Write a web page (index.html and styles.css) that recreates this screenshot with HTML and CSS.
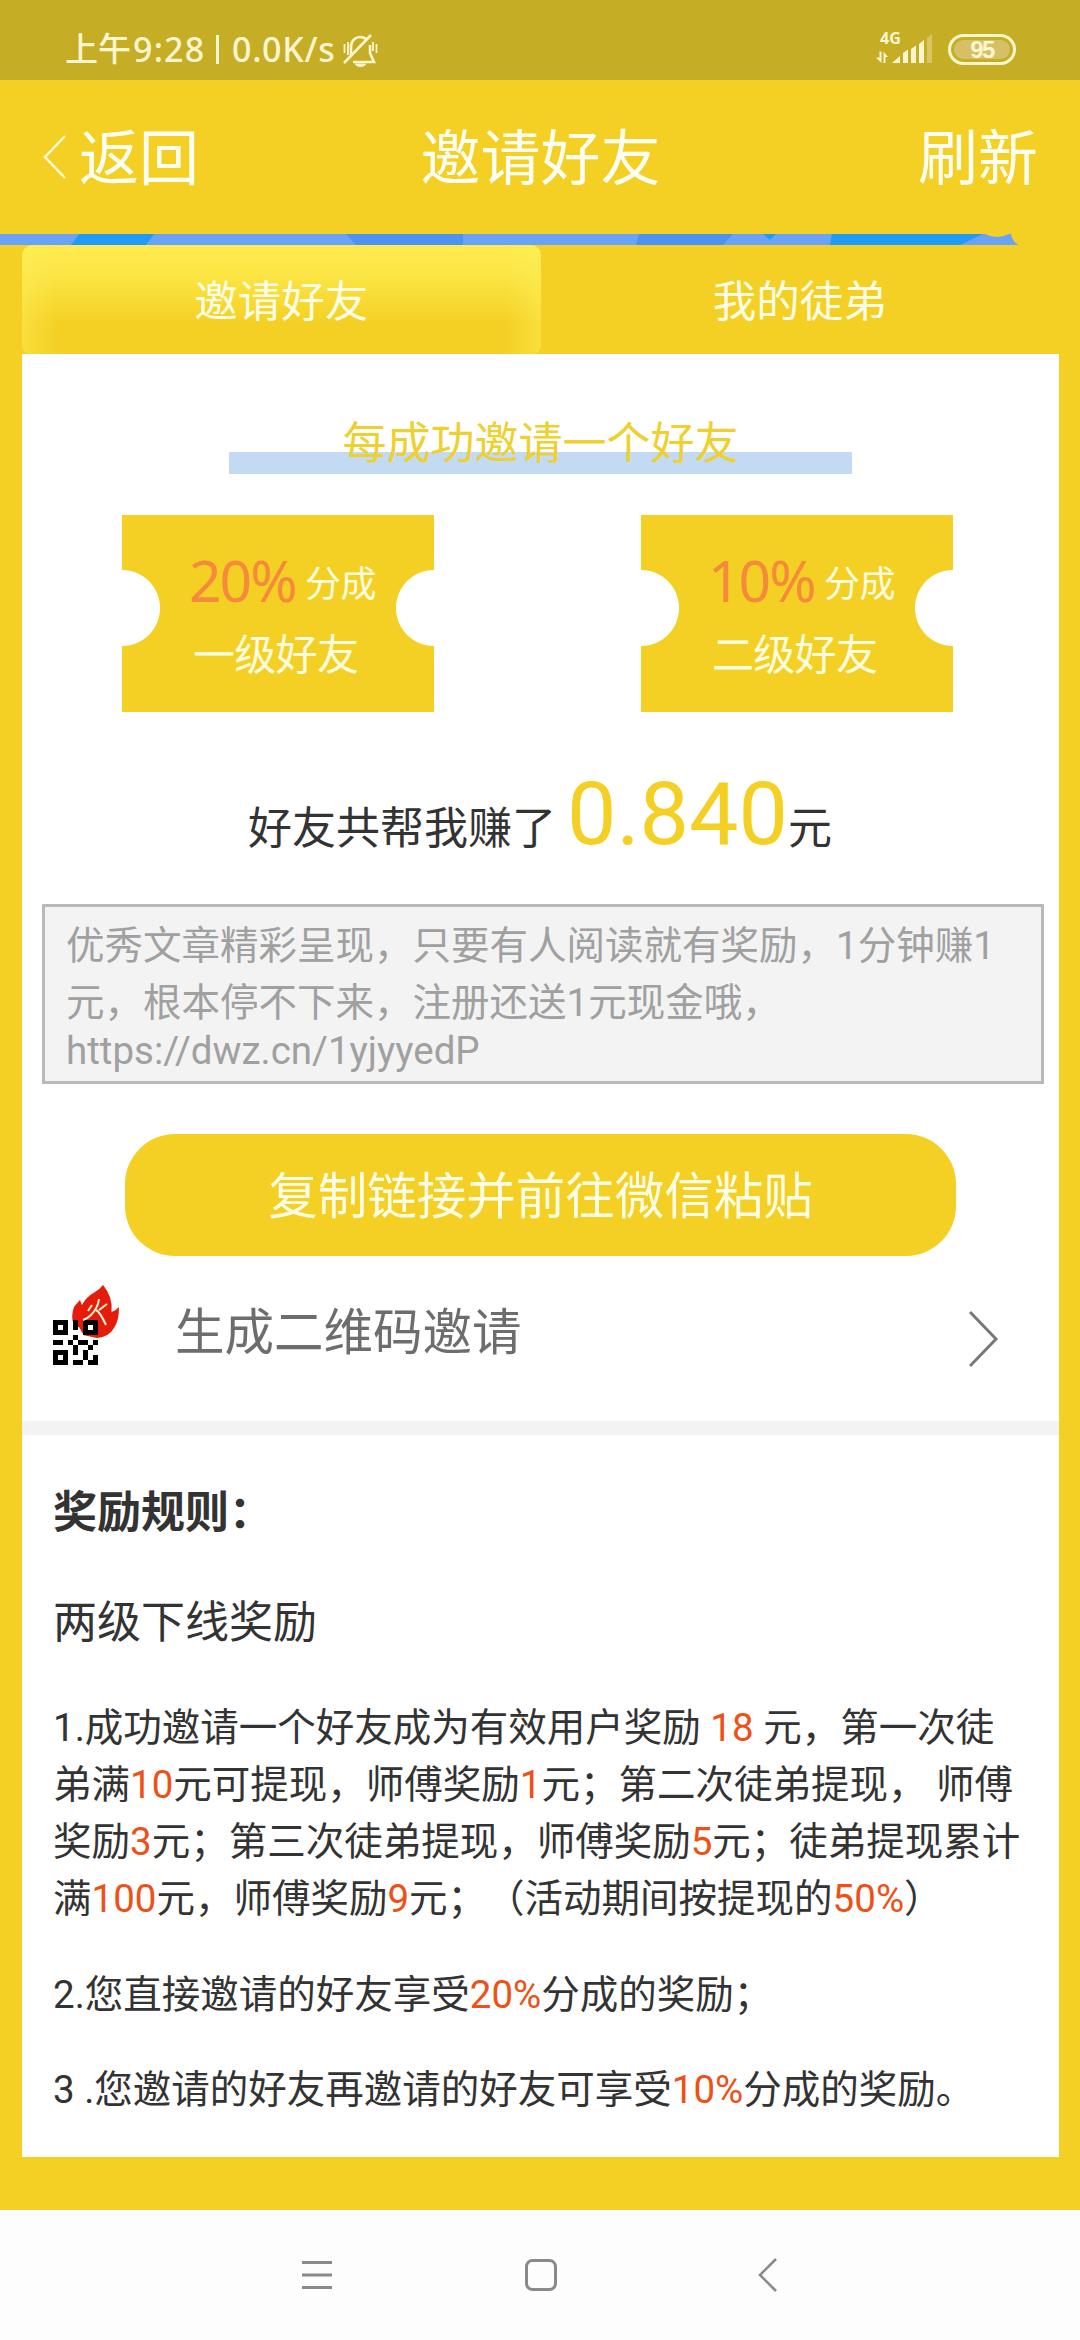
FILE: index.html
```html
<!DOCTYPE html>
<html lang="zh-CN">
<head>
<meta charset="utf-8">
<title>邀请好友</title>
<link rel="stylesheet" href="styles.css">
</head>
<body>
<div class="status">
  <span class="clock">上午</span><span class="time">9:28</span><span class="sep"></span><span class="speed">0.0K/s</span>
  <svg class="bell" width="36" height="36" viewBox="0 0 36 36" fill="none" stroke="#fff6d0" stroke-width="2.600"><path d="M29 3 2 31"/><path d="M9 23V15c0-7 5-10 9-10 3 0 5 .5 7 3M28 13v8l4 9H11"/><path d="M2.500 12v9M6 10v13M31 10v9M34.500 12v9" stroke-width="1.800"/><path d="M13 31.500h11a5.500 3.600 0 0 1-11 0z" fill="#fff6d0" stroke="none"/></svg>
  <div class="signal">
    <span class="net">4G</span>
    <svg width="60" height="32" viewBox="0 0 60 32" fill="#fff6d0"><path d="M3.500 18.500h2V30L0 24.500h3.500zM7.500 30V18.500L12 24H9.500v6z"/><path d="M16 30l8-7v7zM27 20l5-3.500V30h-5zM35 16l5-3.500V30h-5zM43 11l5-4v23h-5z"/><path d="M51 5l5-4v29h-5z" opacity=".35"/></svg>
  </div>
  <div class="battery"><span>95</span></div>
</div>
<header class="bar">
  <a class="back"><svg width="24" height="46" viewBox="0 0 24 46" fill="none" stroke="#fffbe0" stroke-width="2.400"><path d="M22 2 2 23l20 21"/></svg><span>返回</span></a>
  <h1>邀请好友</h1>
  <a class="refresh">刷新</a>
</header>
<svg class="banner" width="1080" height="11" viewBox="0 0 1080 11"><path fill="#69a3f8" d="M0 0h1011q1 8 8 11H0z"/><path fill="#1f9bf7" d="M79 0h75l-8 11H71zM832 0h151l-23 11H830zM763 0h13l-6 6z"/><path fill="#4c91f4" d="M346 0h117v11H356zM639 0h94l-10 11h-87z"/><path fill="#f4d024" d="M985 0h24q-12 6-24 0z"/></svg>
<nav class="tabs"><a class="tab active">邀请好友</a><a class="tab">我的徒弟</a></nav>
<main class="panel">
  <h2 class="title">每成功邀请一个好友</h2>
  <div class="tickets">
    <div class="ticket"><p class="rate"><b>20%</b><i>分成</i></p><p class="level">一级好友</p></div>
    <div class="ticket"><p class="rate"><b>10%</b><i>分成</i></p><p class="level">二级好友</p></div>
  </div>
  <p class="earned">好友共帮我赚了 <strong>0.840</strong>元</p>
  <div class="share"><p>优秀文章精彩呈现，只要有人阅读就有奖励，1分钟赚1</p><p>元，根本停不下来，注册还送1元现金哦，</p><p class="url">https://dwz.cn/1yjyyedP</p></div>
  <button class="copy">复制链接并前往微信粘贴</button>
  <div class="qr-row">
    <svg width="68" height="82" viewBox="0 0 68 82"><path fill="#e51c0a" d="M51 1q10 12 8.500 27 4-1 7.500-5 0 14-5 21-5 9-17 10l-14-3-5-5Q17 38 22 23q3-4 6-7 1 3 2 5 4-8 13-13 5-3 8-7z"/><path fill="#fff" d="M21 43h6l4 7v4h-6zM36 40h6v6h-6z"/><path fill-rule="evenodd" d="M1 36h15v15H1zM6 41v5h5v-5zM1 66h15v15H1zM6 71v5h5v-5zM31 36h15v15H31zM36 41v5h5v-5zM21 36h5v10h-5zM1 56h10v5H1zM21 51h5v5h-5zM16 56h5v5h-5zM26 56h10v5H26zM41 56h5v5h-5zM21 61h5v10h-5zM36 61h5v5h-5zM31 66h5v10h-5zM21 76h10v5H21zM36 76h5v-5h5v10H36z"/><path d="M36 27l4-6M47 15q-1 9-8 16-4 4-8 5M44 26q4 2 10 15M47 26l8-6" fill="none" stroke="#fff1d0" stroke-width="2"/></svg>
    <span>生成二维码邀请</span>
    <svg class="go" width="30" height="58" viewBox="0 0 30 58" fill="none" stroke="#777" stroke-width="3"><path d="M1 2l26 27L1 56"/></svg>
  </div>
  <section class="rules">
    <h3>奖励规则：</h3>
    <h4>两级下线奖励</h4>
    <p>1.成功邀请一个好友成为有效用户奖励 <em>18</em> 元，第一次徒<br>弟满<em>10</em>元可提现，师傅奖励<em>1</em>元；第二次徒弟提现， 师傅<br>奖励<em>3</em>元；第三次徒弟提现，师傅奖励<em>5</em>元；徒弟提现累计<br>满<em>100</em>元，师傅奖励<em>9</em>元；（活动期间按提现的<em>50%</em>）</p>
    <p>2.您直接邀请的好友享受<em>20%</em>分成的奖励；</p>
    <p>3 .您邀请的好友再邀请的好友可享受<em>10%</em>分成的奖励。</p>
  </section>
</main>
<footer class="nav">
  <svg width="36" height="36" viewBox="0 0 36 36" stroke="#8a8a8a" stroke-width="3"><path d="M3 5.500h30M3 18h30M3 30.500h30"/></svg>
  <svg width="36" height="36" viewBox="0 0 36 36" fill="none" stroke="#8a8a8a" stroke-width="3"><rect x="3.500" y="3.500" width="29" height="29" rx="6"/></svg>
  <svg width="36" height="36" viewBox="0 0 36 36" fill="none" stroke="#8a8a8a" stroke-width="2.600"><path d="M27 2 11 18l16 16"/></svg>
</footer>
</body>
</html>
```

FILE: styles.css
```css
* { box-sizing: border-box; margin: 0; padding: 0; }
body {
  width: 1080px;
  height: 2340px;
  overflow: hidden;
  display: flex;
  flex-direction: column;
  background: #f4d024;
  color: #333;
  font-family: Roboto, "Noto Sans CJK SC", sans-serif;
  text-spacing-trim: space-all;
  white-space: nowrap;
}
h1, h2, h4 { font-weight: 400; }

.status {
  height: 80px;
  flex: none;
  display: flex;
  align-items: center;
  padding: 18px 64px 0 65px;
  background: #c5ad26;
  color: #fff6d0;
  font: 500 33px/40px "Noto Sans", "Noto Sans CJK SC", sans-serif;
}
.clock { width: 68px; }
.time { width: 83px; font-size: 34px; letter-spacing: 1.2px; }
.sep { width: 3px; height: 29px; background: #fff6d0; }
.speed { margin-left: 13px; width: 110px; font-size: 34px; letter-spacing: .7px; }
.bell { flex: none; margin-top: 2px; }
.signal { margin-left: auto; position: relative; display: flex; width: 60px; }
.net { position: absolute; left: 4px; top: -4px; font: 700 16px/18px "Noto Sans", sans-serif; }
.battery {
  width: 68px;
  height: 31px;
  margin-left: 12px;
  padding: 3px;
  border: 3px solid #fff6d0;
  border-radius: 16px;
  font: 700 24px/20px "Liberation Sans", sans-serif;
  letter-spacing: -1.500px;
  text-align: center;
}
.battery span { display: block; height: 19px; border-radius: 10px; background: #d6c065; }

.bar {
  height: 154px;
  flex: none;
  display: grid;
  grid-template-columns: 1fr auto 1fr;
  align-items: center;
  padding: 0 42px 0 43px;
  color: #fffef5;
  font-size: 60px;
  line-height: 80px;
}
.bar h1 { font-size: 60px; padding-top: 5px; }
.back { display: flex; align-items: center; gap: 12px; }
.back span, .refresh { padding-top: 5px; }
.refresh { text-align: right; }
.banner { flex: none; display: block; }

.tabs { height: 109px; flex: none; display: flex; padding: 0 21px 0 22px; }
.tab {
  flex: 1;
  color: #fffde8;
  font-size: 43.500px;
  line-height: 115px;
  text-align: center;
}
.tab.active {
  border-radius: 10px 10px 8px 8px;
  background:
    linear-gradient(90deg, rgba(255, 238, 88, .5), transparent 36px, transparent calc(100% - 36px), rgba(255, 238, 88, .5)),
    linear-gradient(#ffec52, #fbe544 30px, #f4d024 78px);
}

.panel { width: 1037px; height: 1803px; flex: none; margin-left: 22px; background: #fff; }
.title {
  width: 623px;
  height: 56px;
  margin: 64px auto 0 207px;
  background: linear-gradient(#c2daf4, #c2daf4) 0 34px / 100% 22px no-repeat;
  color: #eed02f;
  font-size: 44px;
  line-height: 52px;
  text-align: center;
}
.tickets { display: flex; justify-content: space-between; padding: 41px 106px 0 100px; }
.ticket {
  width: 312px;
  height: 197px;
  padding-top: 34px;
  background:
    radial-gradient(circle at 0 93px, #fff 37.500px, transparent 38.500px),
    radial-gradient(circle at 100% 93px, #fff 37.500px, transparent 38.500px),
    #f4d024;
  color: #fffde0;
}
.rate { display: flex; align-items: center; height: 62px; padding-left: 67px; }
.rate b { width: 116px; color: #f68a3c; font: 400 57px/62px "Noto Sans", sans-serif; letter-spacing: -2px; }
.rate i { font-size: 36px; font-style: normal; letter-spacing: -.5px; padding-top: 2px; }
.level { padding-left: 71px; font-size: 42px; line-height: 60px; letter-spacing: -.7px; margin-top: 15px; }
.earned { margin-top: 47px; height: 108px; padding-left: 226px; font-size: 44px; line-height: 110px; }
.earned strong { color: #f4d024; font-size: 88px; font-weight: 400; }
.share {
  width: 1002px;
  height: 180px;
  margin: 37px 0 0 20px;
  padding: 10px 0 0 21px;
  border: 3px solid #b9b9b9;
  background: #f3f3f3;
  color: #a0a0a0;
  font-size: 38.500px;
  line-height: 57px;
}
.url { line-height: 40px; }
.copy {
  display: block;
  width: 831px;
  height: 122px;
  margin: 50px 0 0 103px;
  padding-top: 4px;
  border: 0;
  border-radius: 50px;
  background: #f4d024;
  color: #fffde8;
  font: 49.500px/118px Roboto, "Noto Sans CJK SC", sans-serif;
}
.qr-row {
  height: 179px;
  display: flex;
  align-items: flex-start;
  padding: 28px 60px 0 30px;
  border-bottom: 14px solid #f3f3f3;
  color: #6d6d6d;
  font-size: 49.500px;
  line-height: 98px;
}
.qr-row span { margin-left: 55px; }
.go { margin: 26px 0 0 auto; }
.rules { padding: 48px 0 0 31px; }
.rules h3, .rules h4 { font-size: 44px; line-height: 60px; }
.rules h4 { margin: 50px 0 46px; }
.rules p { font-size: 38.500px; line-height: 57px; margin-bottom: 38.500px; }
.rules em { color: #ee5016; font-style: normal; }
.nav {
  height: 130px;
  flex: none;
  display: flex;
  justify-content: space-between;
  align-items: center;
  margin-top: 53px;
  padding: 0 295px 0 299px;
  background: #fdfdfd;
}
.nav svg:nth-child(2) { margin-right: 3px; }
```
